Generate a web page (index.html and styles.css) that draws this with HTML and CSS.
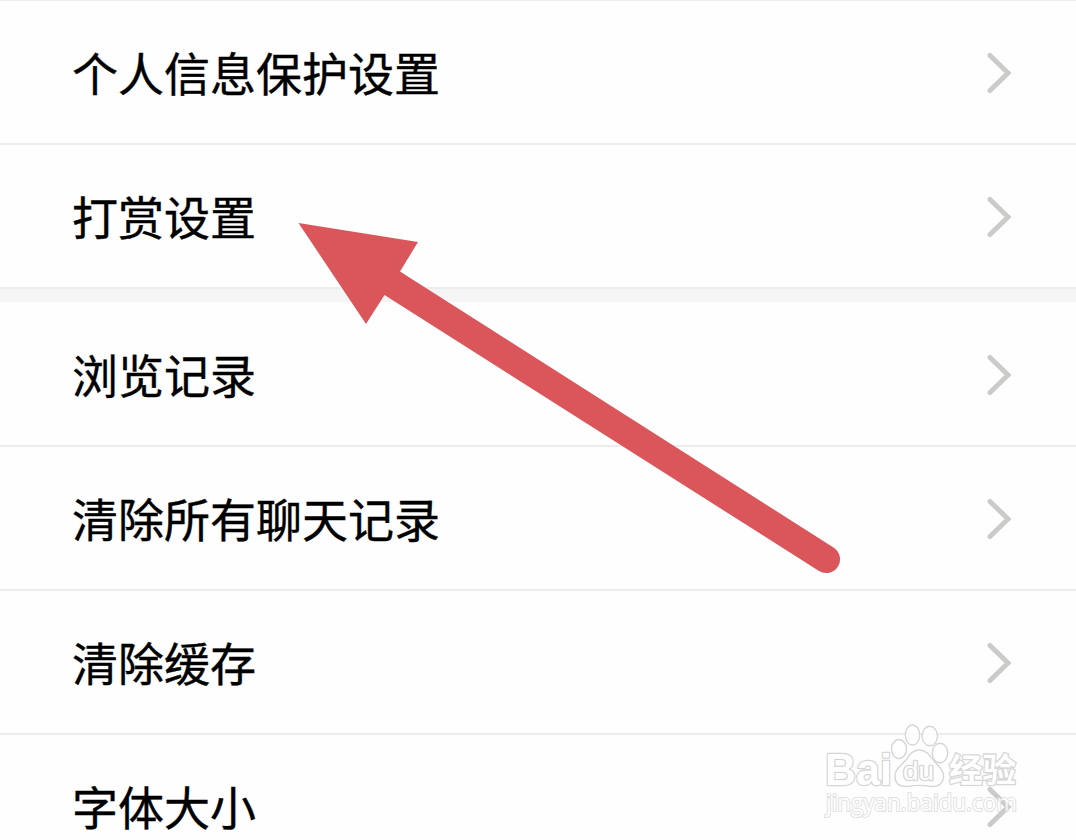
FILE: index.html
```html
<!DOCTYPE html>
<html lang="zh-CN">
<head>
  <meta charset="UTF-8" />
  <meta name="viewport" content="width=device-width, initial-scale=1.0" />
  <title>设置</title>
  <link rel="stylesheet" href="styles.css">
</head>
<body>

  <main class="settings">
    <section class="group">
      <a class="row" href="#">
        <span class="label">个人信息保护设置</span>
        <svg class="chevron" viewBox="0 0 26 42"><path d="M4 3.5 L22 21 L4 38.5" /></svg>
      </a>
      <a class="row" href="#">
        <span class="label">打赏设置</span>
        <svg class="chevron" viewBox="0 0 26 42"><path d="M4 3.5 L22 21 L4 38.5" /></svg>
      </a>
    </section>

    <section class="group">
      <a class="row" href="#">
        <span class="label">浏览记录</span>
        <svg class="chevron" viewBox="0 0 26 42"><path d="M4 3.5 L22 21 L4 38.5" /></svg>
      </a>
      <a class="row" href="#">
        <span class="label">清除所有聊天记录</span>
        <svg class="chevron" viewBox="0 0 26 42"><path d="M4 3.5 L22 21 L4 38.5" /></svg>
      </a>
      <a class="row" href="#">
        <span class="label">清除缓存</span>
        <svg class="chevron" viewBox="0 0 26 42"><path d="M4 3.5 L22 21 L4 38.5" /></svg>
      </a>
      <a class="row" href="#">
        <span class="label">字体大小</span>
        <svg class="chevron" viewBox="0 0 26 42"><path d="M4 3.5 L22 21 L4 38.5" /></svg>
      </a>
    </section>
  </main>

  <!-- Arrow pointing at the second row -->
  <svg class="arrow" viewBox="0 0 544 352">
    <path d="M1.500 1 L121 20 L103 49.500 L536.500 325.500 A13.800 13.800 0 0 1 522 349 L87.500 73 L69 102 Z" />
  </svg>

  <!-- Watermark -->
  <svg class="watermark" viewBox="0 0 200 96">
    <g class="outline">
      <text class="brand" x="3" y="62.500" textLength="67" lengthAdjust="spacingAndGlyphs">Bai</text>
      <ellipse cx="77" cy="27" rx="7.500" ry="9.500" />
      <ellipse cx="90.500" cy="13" rx="7.200" ry="10" />
      <ellipse cx="107.800" cy="14" rx="7.700" ry="9.800" />
      <ellipse cx="118" cy="31" rx="7.800" ry="9.800" />
      <path d="M97 28 C105 28 108 34 112 39 C117 45 122 48 121.500 55 C121 62 116 65 109 64.500 C101 63 93 63 85 64.500 C77 65 73 61 73 54 C73 47 79 44 84 38 C88 32 91 28 97 28 Z" />
      <text class="du" x="81" y="57.500" textLength="31" lengthAdjust="spacingAndGlyphs">du</text>
      <text class="cn" x="127" y="59.500" textLength="67" lengthAdjust="spacingAndGlyphs">经验</text>
      <text class="url" x="4" y="89" textLength="191" lengthAdjust="spacingAndGlyphs">jingyan.baidu.com</text>
    </g>
  </svg>

</body>
</html>
```

FILE: styles.css
```css
*, *::before, *::after {
  box-sizing: border-box;
}

:root {
  --color-bg: #fefefe;
  --color-text: #000000;
  --color-line: #ededed;
  --color-gap: #f5f5f5;
  --color-chevron: #cbcbc9;
  --color-arrow: #db565b;
}

html, body {
  margin: 0;
  padding: 0;
  height: 100%;
  overflow: hidden;
  font-family: 'Noto Sans CJK SC', sans-serif;
  color: var(--color-text);
  background-color: var(--color-bg);
}

.settings {
  height: 840px;
  overflow: hidden;
  border-top: 1px solid var(--color-line);
}

.group + .group {
  border-top: 13px solid var(--color-gap);
}

.row {
  display: flex;
  justify-content: space-between;
  align-items: center;
  height: 144px;
  padding: 0 64px 0 72px;
  border-bottom: 2px solid var(--color-line);
  color: inherit;
  text-decoration: none;
}

.group + .group .row:first-child {
  height: 145px;
}

.label {
  margin-top: -2px;
  font-size: 46px;
  line-height: 68px;
  -webkit-text-stroke: 0.4px var(--color-text);
}

.chevron {
  width: 26px;
  height: 42px;
  margin-top: 2px;
  fill: none;
  stroke: var(--color-chevron);
  stroke-width: 5;
  stroke-linecap: round;
}

.arrow {
  position: absolute;
  left: 297px;
  top: 222px;
  width: 544px;
  height: 352px;
  fill: var(--color-arrow);
}

.watermark {
  position: absolute;
  left: 822px;
  top: 722px;
  width: 200px;
  height: 96px;
}

.outline {
  fill: rgba(255, 255, 255, 0.75);
  stroke: #d6d6d6;
  stroke-width: 1.4;
  stroke-linejoin: round;
}

.outline text {
  paint-order: stroke;
  stroke-width: 2.6;
  fill: #ffffff;
}

.brand {
  font-family: 'Liberation Sans', sans-serif;
  font-size: 45px;
  font-weight: 700;
}

.du {
  font-family: 'Liberation Sans', sans-serif;
  font-size: 26px;
}

.cn {
  font-family: 'Noto Sans CJK SC', sans-serif;
  font-size: 33px;
  font-weight: 700;
}

.outline .url {
  font-family: 'Open Sans', sans-serif;
  font-size: 23px;
  stroke-width: 2;
  opacity: 0.75;
}
```
